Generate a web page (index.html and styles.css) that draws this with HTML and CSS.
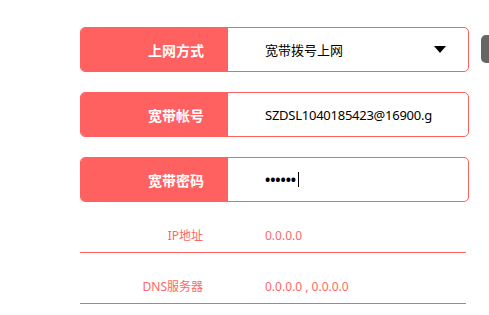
FILE: index.html
```html
<!DOCTYPE html>
<html lang="zh-CN">
<head>
<meta charset="utf-8">
<title>上网设置</title>
<link rel="stylesheet" href="styles.css">
</head>
<body>
<div class="side-tab"></div>
<div class="form">
  <div class="row">
    <div class="label">上网方式</div>
    <div class="field select">
      <span class="value">宽带拨号上网</span>
      <svg class="arrow" width="12" height="7" viewBox="0 0 12 7"><polygon points="0,0 12,0 6,7" fill="#000"/></svg>
    </div>
  </div>
  <div class="row">
    <div class="label">宽带帐号</div>
    <div class="field"><span class="value account">SZDSL1040185423@16900.g</span></div>
  </div>
  <div class="row">
    <div class="label">宽带密码</div>
    <div class="field"><span class="value dots">••••••</span><span class="caret"></span></div>
  </div>
  <div class="info">
    <div class="info-label">IP地址</div>
    <div class="info-value">0.0.0.0</div>
  </div>
  <div class="info">
    <div class="info-label">DNS服务器</div>
    <div class="info-value">0.0.0.0 , 0.0.0.0</div>
  </div>
</div>
</body>
</html>
```
FILE: styles.css
```css
html, body {
  margin: 0;
  padding: 0;
  background: #fff;
  overflow: hidden;
}
body {
  position: relative;
  width: 489px;
  height: 315px;
  font-family: "Noto Sans", "Noto Sans CJK SC", sans-serif;
}
.side-tab {
  position: absolute;
  left: 481px;
  top: 35px;
  width: 20px;
  height: 28px;
  background: #666;
  border-radius: 5px;
}
.form {
  margin-left: 80px;
  padding-top: 27px;
  width: 389px;
}
.row {
  display: flex;
  height: 45px;
  box-sizing: border-box;
  border: 1px solid #ff6161;
  border-radius: 5px;
  overflow: hidden;
  margin-bottom: 20px;
}
.label {
  width: 147px;
  flex: none;
  background: #ff6161;
  color: #fff;
  font-weight: bold;
  font-size: 14px;
  padding-right: 24px;
  box-sizing: border-box;
  display: flex;
  align-items: center;
  justify-content: flex-end;
}
.field {
  flex: 1;
  min-width: 0;
  display: flex;
  align-items: center;
  padding: 0 30px 0 37px;
  color: #000;
  font-size: 13px;
  white-space: nowrap;
}
.field.select {
  padding-right: 22px;
}
.arrow {
  margin-left: auto;
}
.account {
  letter-spacing: -0.25px;
}
.dots {
  font-size: 14px;
  font-weight: bold;
  letter-spacing: -0.1px;
}
.caret {
  display: inline-block;
  width: 1px;
  height: 15px;
  background: #000;
  margin-left: 2px;
}
.info {
  display: flex;
  height: 51px;
  box-sizing: border-box;
  width: 386px;
  border-bottom: 1px solid #ff6161;
  padding-top: 26px;
  font-size: 12px;
  color: #ff6666;
  line-height: 16px;
}
.row + .info {
  margin-top: -20px;
}
.info-label {
  width: 148px;
  padding-right: 25px;
  box-sizing: border-box;
  text-align: right;
}
.info-value {
  padding-left: 37px;
}
```
